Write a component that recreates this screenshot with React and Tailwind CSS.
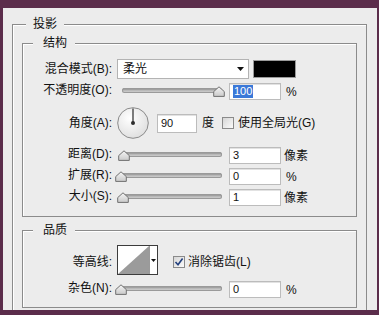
const CJK = "font-['Liberation_Sans','Noto_Sans_CJK_SC',sans-serif]";
const NUM = "font-['Liberation_Sans','Noto_Sans',sans-serif]";

function Group({ title, legendClass, children }) {
  return (
    <fieldset className="border border-[#8b8b8b] shadow-[inset_1px_1px_0_#ffffff] p-0 m-0 min-w-0">
      <legend className={`bg-[#ececec] text-[12px] leading-[16px] text-[#111] ${legendClass}`}>{title}</legend>
      {children}
    </fieldset>
  );
}

function Label({ children, className = '' }) {
  return (
    <div className={`w-[89px] shrink-0 text-right text-[12px] leading-[16px] text-[#111] ${className}`}>
      {children}
    </div>
  );
}

function Thumb({ left }) {
  return (
    <svg className="absolute top-0" style={{ left }} width="12" height="11" viewBox="0 0 12 11">
      <defs>
        <linearGradient id="thumbFill" x1="0" y1="0" x2="0" y2="1">
          <stop offset="0" stopColor="#f6f6f6" />
          <stop offset="1" stopColor="#c9c9c9" />
        </linearGradient>
      </defs>
      <path
        d="M6 0.8 L11.3 5.6 V10.4 H0.7 V5.6 Z"
        fill="url(#thumbFill)"
        stroke="#707070"
        strokeWidth="1"
        strokeLinejoin="round"
      />
    </svg>
  );
}

function Slider({ pos }) {
  return (
    <div className="relative w-[108px] h-[12px] shrink-0">
      <div className="absolute left-[5px] top-[2px] w-[100px] h-[5px] rounded-[3px] bg-linear-to-b from-[#7e7e7e] via-[#b9b9b9] to-[#dadada] shadow-[inset_0_0_0_1px_#9a9a9a]" />
      <Thumb left={pos} />
    </div>
  );
}

function Field({ width = 'w-[52px]', children, className = '' }) {
  return (
    <div
      className={`${width} h-[17px] shrink-0 bg-white border border-[#bcbcbc] shadow-[inset_0_1px_0_#e2e2e2] flex items-center pl-[3px] text-[11px] leading-[13px] text-[#111] ${NUM} ${className}`}
    >
      {children}
    </div>
  );
}

function CheckBox({ checked }) {
  return (
    <div className="w-[12px] h-[12px] shrink-0 border border-[#8a8a8a] bg-linear-to-br from-[#d6d6d6] to-[#fbfbfb] flex items-center justify-center">
      {checked && (
        <svg width="10" height="10" viewBox="0 0 10 10">
          <path d="M1.5 5 L4 7.8 L8.6 1.5" fill="none" stroke="#22407e" strokeWidth="1.6" />
        </svg>
      )}
    </div>
  );
}

function SliderRow({ label, pos, value, unit, unitClass = 'ml-[5px]' }) {
  return (
    <div className="flex items-center h-[21px]">
      <Label className="mb-[4px]">{label}</Label>
      <div className="ml-[5px]">
        <Slider pos={pos} />
      </div>
      <Field className="ml-[4px]">{value}</Field>
      <span className={`${unitClass} text-[12px] leading-[16px] text-[#111]`}>{unit}</span>
    </div>
  );
}

export default function App() {
  return (
    <div className={`w-[379px] h-[315px] bg-[#5b2d4b] pl-[3px] pr-[2px] pt-[8px] pb-[5px] ${CJK}`}>
      <div className="h-full bg-[#ececec] overflow-hidden">
        <div className="ml-[9px] w-[355px] mt-[8px]">
          <Group title="投影" legendClass="ml-[13px] px-[7px]">
            <div className="px-[9px] pt-[3px] pb-[30px]">
              {/* 结构 */}
              <Group title="结构" legendClass="ml-[10px] pl-[10px] pr-[8px]">
                <div className="pt-[8px] pb-[8px]">
                  <div className="flex items-center h-[20px]">
                    <Label>混合模式(B):</Label>
                    <div className="ml-[5px] w-[132px] h-[20px] bg-white border border-[#b3b3b3] flex items-center justify-between pl-[5px] pr-[4px]">
                      <span className="text-[12px] leading-[16px] text-[#111]">柔光</span>
                      <svg width="7" height="4" viewBox="0 0 7 4">
                        <path d="M0 0 H7 L3.5 4 Z" fill="#111" />
                      </svg>
                    </div>
                    <div className="ml-[4px] w-[43px] h-[18px] bg-black border border-[#9a9a9a]" />
                  </div>

                  <div className="mt-[4px] flex items-center h-[17px]">
                    <Label className="mb-[3px]">不透明度(O):</Label>
                    <div className="ml-[5px]">
                      <Slider pos={96} />
                    </div>
                    <Field className="ml-[4px]">
                      <span className="bg-[#3a78d8] text-white px-[1px]">100</span>
                    </Field>
                    <span className="ml-[5px] text-[12px] leading-[16px] text-[#111]">%</span>
                  </div>

                  <div className="mt-[7px] flex items-center h-[32px]">
                    <Label>角度(A):</Label>
                    <svg className="ml-[5px] shrink-0" width="32" height="32" viewBox="0 0 32 32">
                      <defs>
                        <radialGradient id="dialFill" cx="0.4" cy="0.35" r="0.7">
                          <stop offset="0" stopColor="#ffffff" />
                          <stop offset="1" stopColor="#dedede" />
                        </radialGradient>
                      </defs>
                      <circle cx="16" cy="16" r="15.3" fill="url(#dialFill)" stroke="#8a8a8a" strokeWidth="1" />
                      <line x1="16" y1="16" x2="16" y2="1.5" stroke="#3a3a3a" strokeWidth="1.3" />
                      <circle cx="16" cy="16" r="2" fill="#2e2e2e" />
                    </svg>
                    <Field width="w-[40px]" className="ml-[8px] h-[19px]">90</Field>
                    <span className="ml-[5px] text-[12px] leading-[16px] text-[#111]">度</span>
                    <div className="ml-[8px]">
                      <CheckBox />
                    </div>
                    <span className="ml-[4px] text-[12px] leading-[16px] text-[#111]">使用全局光(G)</span>
                  </div>

                  <div className="mt-[6px]">
                    <SliderRow label="距离(D):" pos={1} value="3" unit="像素" unitClass="ml-[3px]" />
                    <SliderRow label="扩展(R):" pos={-2} value="0" unit="%" />
                    <SliderRow label="大小(S):" pos={0} value="1" unit="像素" unitClass="ml-[3px]" />
                  </div>
                </div>
              </Group>

              {/* 品质 */}
              <div className="mt-[5px]">
                <Group title="品质" legendClass="ml-[10px] pl-[10px] pr-[8px]">
                  <div className="pt-[7px] pb-[7px]">
                    <div className="flex items-center h-[30px]">
                      <Label className="mt-[4px]">等高线:</Label>
                      <div className="ml-[5px] w-[41px] h-[30px] shrink-0 border border-[#3c3c3c] bg-white flex">
                        <svg width="31" height="28" viewBox="0 0 31 28" className="shrink-0">
                          <rect width="31" height="28" fill="#ffffff" />
                          <path d="M0 28 L31 0 V28 Z" fill="#9b9b9b" />
                        </svg>
                        <div className="flex-1 border-l border-[#9a9a9a] flex items-center justify-center">
                          <svg width="5" height="3" viewBox="0 0 5 3">
                            <path d="M0 0 H5 L2.5 3 Z" fill="#111" />
                          </svg>
                        </div>
                      </div>
                      <div className="ml-[15px] mt-[3px]">
                        <CheckBox checked />
                      </div>
                      <span className="ml-[3px] mt-[3px] text-[12px] leading-[16px] text-[#111]">消除锯齿(L)</span>
                    </div>
                    <div className="mt-[4px]">
                      <SliderRow label="杂色(N):" pos={-2} value="0" unit="%" />
                    </div>
                  </div>
                </Group>
              </div>
            </div>
          </Group>
        </div>
      </div>
    </div>
  );
}
